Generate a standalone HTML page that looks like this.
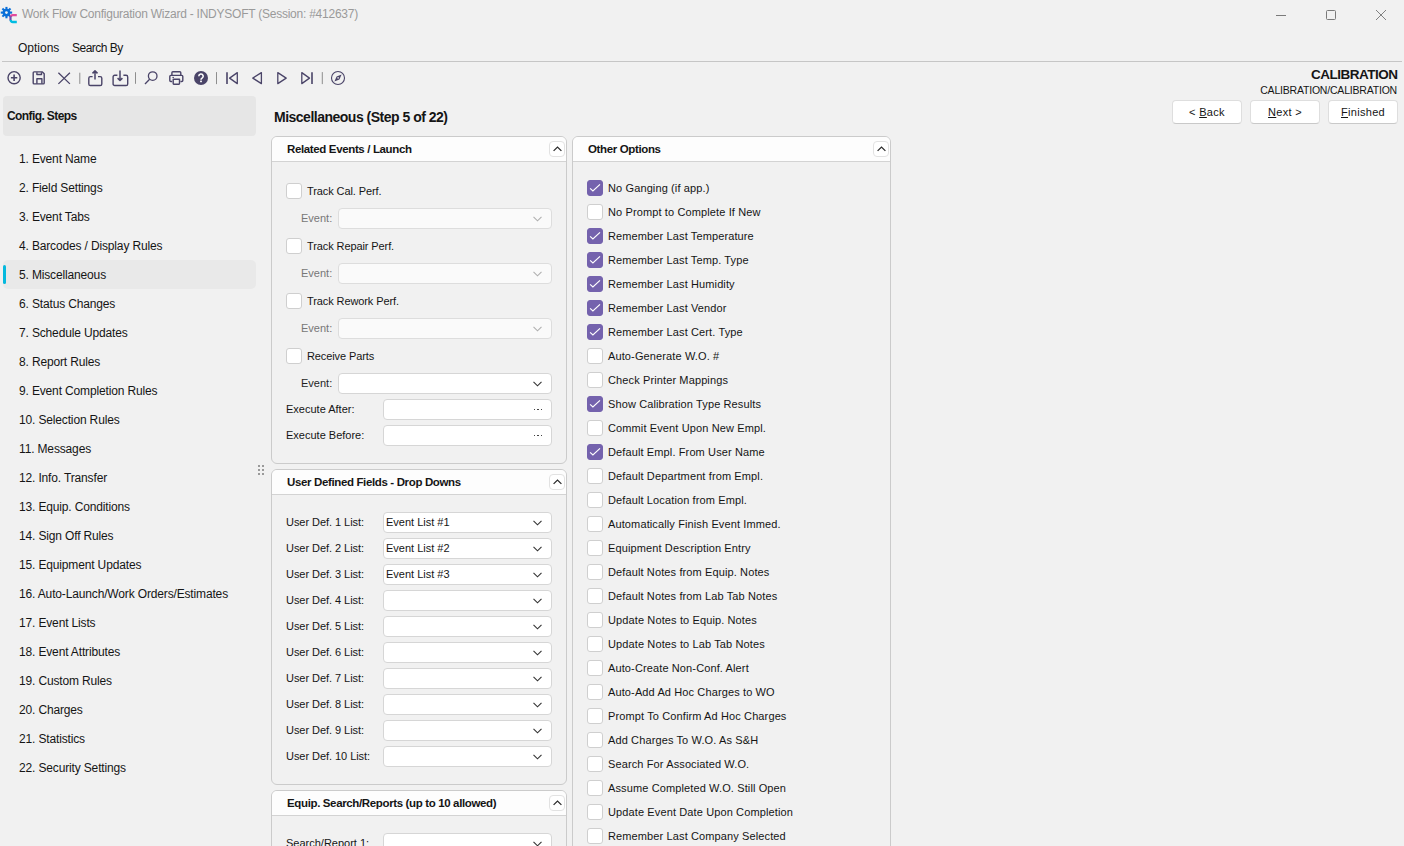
<!DOCTYPE html><html><head><meta charset="utf-8"><style>
*{margin:0;padding:0;box-sizing:border-box}
html,body{width:1404px;height:846px;overflow:hidden;background:#f1f1f1;font-family:"Liberation Sans",sans-serif;color:#151515}
.a{position:absolute}
.t{position:absolute;font-size:12px;line-height:14px;height:14px;margin-top:-7px;white-space:nowrap}
.b{font-weight:bold}
.s{font-size:11px;line-height:13px;height:13px;margin-top:-6.5px}
.hd{font-size:11.5px;letter-spacing:-0.36px}
.panel{position:absolute;border:1px solid #cbcbcb;border-radius:6px;background:#f1f1f1;overflow:hidden}
.ph{position:absolute;left:0;right:0;top:0;background:#fdfdfd;border-bottom:1px solid #d3d3d3}
.colbtn{position:absolute;width:16px;height:16px;border:1px solid #e2e2e2;border-radius:4px;background:#fff;display:flex;align-items:center;justify-content:center}
.cb{position:absolute;width:16px;height:16px;border:1px solid #cfcfcf;border-radius:3px;background:#fff}
.cb.on{background:#7462ad;border-color:#7462ad}
.cb svg{position:absolute;left:-1px;top:-1px}
.combo{position:absolute;height:21px;border:1px solid #d6d6d6;border-radius:4px;background:#fff}
.combo.dis{background:#fafafa;border-color:#dddddd}
.combo .chev{position:absolute;right:9px;top:7px}
.btn{position:absolute;height:24px;border:1px solid #dedede;border-bottom-color:#c9c9c9;border-radius:4px;background:#fff}
.ic{position:absolute}
.sep{position:absolute;width:1px;height:12px;background:#9a96a8;top:72px}
</style></head><body>

<svg class="a" style="left:0;top:5px" width="20" height="20" viewBox="0 0 20 20">
<g fill="#0b6fd8"><circle cx="6.45" cy="7.6" r="3.9"/><rect x="5.4" y="1.9" width="2.1" height="11.4" transform="rotate(0 6.45 7.6)"/><rect x="5.4" y="1.9" width="2.1" height="11.4" transform="rotate(45 6.45 7.6)"/><rect x="5.4" y="1.9" width="2.1" height="11.4" transform="rotate(90 6.45 7.6)"/><rect x="5.4" y="1.9" width="2.1" height="11.4" transform="rotate(135 6.45 7.6)"/></g>
<circle cx="6.45" cy="7.6" r="1.35" fill="#f1f1f1"/>
<path d="M16.8 10.1h-4a2 2 0 0 0 -2 2" fill="none" stroke="#e24a9c" stroke-width="2.2"/>
<path d="M10.5 11.3v4.3" fill="none" stroke="#6a4fb0" stroke-width="2.2"/>
<path d="M10.8 15a2 2 0 0 0 2 2h4" fill="none" stroke="#00bde2" stroke-width="2.3"/>
</svg>
<div class="t" style="left:22px;top:14px;color:#9a9a9a;letter-spacing:-0.24px">Work Flow Configuration Wizard - INDYSOFT (Session: #412637)</div>
<div class="a" style="left:1276px;top:15px;width:10px;height:1px;background:#7a7a7a"></div>
<div class="a" style="left:1326px;top:10px;width:10px;height:10px;border:1px solid #7a7a7a;border-radius:1.5px"></div>
<svg class="a" style="left:1376px;top:10px" width="10" height="10" viewBox="0 0 10 10"><path d="M0 0L10 10M10 0L0 10" stroke="#7a7a7a" stroke-width="0.95"/></svg>
<div class="t" style="left:18px;top:48px;">Options</div>
<div class="t" style="left:72px;top:48px;letter-spacing:-0.5px">Search By</div>
<div class="a" style="left:2px;top:61px;width:1400px;height:1px;background:#c6c6c6"></div>
<svg class="a" style="left:0;top:62px" width="360" height="30" viewBox="0 62 360 30">
<g fill="none" stroke="#4a4468" stroke-width="1.4" stroke-linejoin="round">
<circle cx="14.1" cy="77.7" r="6.1"/><path d="M14.1 74.6v6.3M10.9 77.7h6.4" stroke-width="1.6"/>
<path d="M35.2 71.9h7.2l1.8 1.8v9.3a0.9 0.9 0 0 1 -0.9 0.9h-9.2a0.9 0.9 0 0 1 -0.9 -0.9v-10.2a0.9 0.9 0 0 1 0.9 -0.9z"/>
<path d="M36.9 72.2v2.3h4.6v-2.3M36.9 83.8v-5h5v5"/>
<path d="M58.4 72.7l11.5 11.2M69.9 72.7l-11.5 11.2" stroke-width="1.3"/>
<path d="M92.6 76.6h-2.2a1.6 1.6 0 0 0 -1.6 1.6v5.7a1.6 1.6 0 0 0 1.6 1.6h9.8a1.6 1.6 0 0 0 1.6 -1.6v-5.7a1.6 1.6 0 0 0 -1.6 -1.6h-2.2"/>
<path d="M95 79.6v-8.6M92.5 73.4l2.5-2.5 2.5 2.5" stroke-width="1.5"/>
<path d="M117.4 75.3h-2.7a1.6 1.6 0 0 0 -1.6 1.6v7a1.6 1.6 0 0 0 1.6 1.6h11.4a1.6 1.6 0 0 0 1.6 -1.6v-7a1.6 1.6 0 0 0 -1.6 -1.6h-2.7"/>
<path d="M120 70.6v9.6M117.6 78.1l2.4 2.4 2.4-2.4" stroke-width="1.5"/>
<circle cx="152.7" cy="76.1" r="4.3" stroke-width="1.3"/><path d="M149.6 79.2l-4.6 4.8" stroke-width="1.3"/>
<path d="M171.9 75.4v-2.6a1 1 0 0 1 1 -1h6.9a1 1 0 0 1 1 1v2.6"/>
<path d="M172.2 81.5h-1.4a1 1 0 0 1 -1 -1v-4.1a1 1 0 0 1 1 -1h11a1 1 0 0 1 1 1v4.1a1 1 0 0 1 -1 1h-1.4"/>
<path d="M173.2 79.2h6.3v4.4a0.6 0.6 0 0 1 -0.6 0.6h-5.1a0.6 0.6 0 0 1 -0.6 -0.6z"/>
<path d="M172.4 77.4h1.6" stroke-width="1"/>
<path d="M227 72.2v11.8" stroke-width="1.6"/><path d="M237.3 72.6l-7.7 5.5 7.7 5.5z" stroke-width="1.3"/>
<path d="M261.4 72.6l-8.6 5.5 8.6 5.5z" stroke-width="1.3"/>
<path d="M277.8 72.6l8.4 5.5-8.4 5.5z" stroke-width="1.3"/>
<path d="M312 72.2v11.8" stroke-width="1.6"/><path d="M301.8 72.6l7.7 5.5-7.7 5.5z" stroke-width="1.3"/>
<circle cx="338" cy="77.95" r="6.5" stroke-width="1.1"/>
</g>
<path d="M341.6 74.4L339.4 79.5L334.4 81.6L336.6 76.5z" fill="#4a4468"/>
<circle cx="338.1" cy="77.9" r="0.8" fill="#f1f1f1"/>
<circle cx="201" cy="78" r="7" fill="#4a4468"/>
<path d="M198.8 76.2a2.2 2.2 0 1 1 3.3 1.9c-0.8 0.5 -1.1 0.8 -1.1 1.7" fill="none" stroke="#fff" stroke-width="1.6"/>
<rect x="200.1" y="80.6" width="1.8" height="1.6" fill="#fff"/>
<g fill="#8e8e8e"><rect x="79.3" y="72.7" width="1" height="11.2"/><rect x="135" y="72.2" width="1" height="11.6"/><rect x="216" y="72.1" width="1" height="12"/><rect x="321.8" y="72.1" width="1" height="12"/></g>
</svg>
<div class="t b" style="right:6.5px;top:75px;font-size:13.5px;line-height:16px;height:16px;margin-top:-8px;letter-spacing:-0.5px">CALIBRATION</div>
<div class="t" style="right:7px;top:90px;font-size:10.5px;letter-spacing:-0.2px">CALIBRATION/CALIBRATION</div>
<div class="btn" style="left:1172px;top:100px;width:70px"></div>
<div class="t s" style="left:1172px;width:70px;text-align:center;top:112px;letter-spacing:0.3px">&lt; <u>B</u>ack</div>
<div class="btn" style="left:1250px;top:100px;width:70px"></div>
<div class="t s" style="left:1250px;width:70px;text-align:center;top:112px;letter-spacing:0.3px"><u>N</u>ext &gt;</div>
<div class="btn" style="left:1328px;top:100px;width:70px"></div>
<div class="t s" style="left:1328px;width:70px;text-align:center;top:112px;letter-spacing:0.3px"><u>F</u>inished</div>
<div class="a" style="left:3px;top:96px;width:253px;height:40px;background:#e6e6e6;border-radius:4px"></div>
<div class="t b" style="left:7px;top:116px;letter-spacing:-0.6px">Config. Steps</div>
<div class="a" style="left:3px;top:260px;width:253px;height:29px;background:#e9e9e9;border-radius:5px"></div>
<div class="a" style="left:3px;top:265px;width:3px;height:19px;background:#05b9de;border-radius:2px"></div>
<div class="t" style="left:19px;top:158.5px;letter-spacing:-0.15px">1. Event Name</div>
<div class="t" style="left:19px;top:187.5px;letter-spacing:-0.15px">2. Field Settings</div>
<div class="t" style="left:19px;top:216.5px;letter-spacing:-0.15px">3. Event Tabs</div>
<div class="t" style="left:19px;top:245.5px;letter-spacing:-0.15px">4. Barcodes / Display Rules</div>
<div class="t" style="left:19px;top:274.5px;letter-spacing:-0.15px">5. Miscellaneous</div>
<div class="t" style="left:19px;top:303.5px;letter-spacing:-0.15px">6. Status Changes</div>
<div class="t" style="left:19px;top:332.5px;letter-spacing:-0.15px">7. Schedule Updates</div>
<div class="t" style="left:19px;top:361.5px;letter-spacing:-0.15px">8. Report Rules</div>
<div class="t" style="left:19px;top:390.5px;letter-spacing:-0.15px">9. Event Completion Rules</div>
<div class="t" style="left:19px;top:419.5px;letter-spacing:-0.15px">10. Selection Rules</div>
<div class="t" style="left:19px;top:448.5px;letter-spacing:-0.15px">11. Messages</div>
<div class="t" style="left:19px;top:477.5px;letter-spacing:-0.15px">12. Info. Transfer</div>
<div class="t" style="left:19px;top:506.5px;letter-spacing:-0.15px">13. Equip. Conditions</div>
<div class="t" style="left:19px;top:535.5px;letter-spacing:-0.15px">14. Sign Off Rules</div>
<div class="t" style="left:19px;top:564.5px;letter-spacing:-0.15px">15. Equipment Updates</div>
<div class="t" style="left:19px;top:593.5px;letter-spacing:-0.15px">16. Auto-Launch/Work Orders/Estimates</div>
<div class="t" style="left:19px;top:622.5px;letter-spacing:-0.15px">17. Event Lists</div>
<div class="t" style="left:19px;top:651.5px;letter-spacing:-0.15px">18. Event Attributes</div>
<div class="t" style="left:19px;top:680.5px;letter-spacing:-0.15px">19. Custom Rules</div>
<div class="t" style="left:19px;top:709.5px;letter-spacing:-0.15px">20. Charges</div>
<div class="t" style="left:19px;top:738.5px;letter-spacing:-0.15px">21. Statistics</div>
<div class="t" style="left:19px;top:767.5px;letter-spacing:-0.15px">22. Security Settings</div>
<div class="a" style="left:258px;top:465px;width:2px;height:2px;background:#9a9a9a"></div>
<div class="a" style="left:262px;top:465px;width:2px;height:2px;background:#9a9a9a"></div>
<div class="a" style="left:258px;top:469px;width:2px;height:2px;background:#9a9a9a"></div>
<div class="a" style="left:262px;top:469px;width:2px;height:2px;background:#9a9a9a"></div>
<div class="a" style="left:258px;top:473px;width:2px;height:2px;background:#9a9a9a"></div>
<div class="a" style="left:262px;top:473px;width:2px;height:2px;background:#9a9a9a"></div>
<div class="t b" style="left:274px;top:117px;font-size:14px;line-height:16px;height:16px;margin-top:-8px;letter-spacing:-0.5px">Miscellaneous (Step 5 of 22)</div>
<div class="panel" style="left:271px;top:136px;width:296px;height:328px"><div class="ph" style="height:25px"></div></div>
<div class="t b hd" style="left:287px;top:149px;">Related Events / Launch</div>
<div class="colbtn" style="left:549px;top:141px"><svg width="9" height="6" viewBox="0 0 9 6"><path d="M0.6 4.9 L4.5 1.1 L8.4 4.9" fill="none" stroke="#2a2a2a" stroke-width="1.25"/></svg></div>
<div class="cb" style="left:286px;top:183px"></div>
<div class="t s" style="left:307px;top:191px;letter-spacing:-0.1px">Track Cal. Perf.</div>
<div class="t s" style="left:301px;top:218px;color:#777">Event:</div>
<div class="combo dis" style="left:338px;top:208px;width:214px"><svg class="chev" width="9" height="6" viewBox="0 0 9 6"><path d="M0.5 0.8 L4.5 4.8 L8.5 0.8" fill="none" stroke="#b0b0b0" stroke-width="1.1"/></svg></div>
<div class="cb" style="left:286px;top:238px"></div>
<div class="t s" style="left:307px;top:246px;letter-spacing:-0.1px">Track Repair Perf.</div>
<div class="t s" style="left:301px;top:273px;color:#777">Event:</div>
<div class="combo dis" style="left:338px;top:263px;width:214px"><svg class="chev" width="9" height="6" viewBox="0 0 9 6"><path d="M0.5 0.8 L4.5 4.8 L8.5 0.8" fill="none" stroke="#b0b0b0" stroke-width="1.1"/></svg></div>
<div class="cb" style="left:286px;top:293px"></div>
<div class="t s" style="left:307px;top:301px;letter-spacing:-0.1px">Track Rework Perf.</div>
<div class="t s" style="left:301px;top:328px;color:#777">Event:</div>
<div class="combo dis" style="left:338px;top:318px;width:214px"><svg class="chev" width="9" height="6" viewBox="0 0 9 6"><path d="M0.5 0.8 L4.5 4.8 L8.5 0.8" fill="none" stroke="#b0b0b0" stroke-width="1.1"/></svg></div>
<div class="cb" style="left:286px;top:348px"></div>
<div class="t s" style="left:307px;top:356px;letter-spacing:-0.1px">Receive Parts</div>
<div class="t s" style="left:301px;top:383px;color:#1f1f1f">Event:</div>
<div class="combo" style="left:338px;top:373px;width:214px"><svg class="chev" width="9" height="6" viewBox="0 0 9 6"><path d="M0.5 0.8 L4.5 4.8 L8.5 0.8" fill="none" stroke="#333" stroke-width="1.1"/></svg></div>
<div class="t s" style="left:286px;top:409px;">Execute After:</div>
<div class="combo" style="left:383px;top:399px;width:169px"><div class="a" style="left:150px;top:9px;width:1.3px;height:1.3px;background:#444"></div><div class="a" style="left:153.3px;top:9px;width:1.3px;height:1.3px;background:#444"></div><div class="a" style="left:156.6px;top:9px;width:1.3px;height:1.3px;background:#444"></div></div>
<div class="t s" style="left:286px;top:435px;">Execute Before:</div>
<div class="combo" style="left:383px;top:425px;width:169px"><div class="a" style="left:150px;top:9px;width:1.3px;height:1.3px;background:#444"></div><div class="a" style="left:153.3px;top:9px;width:1.3px;height:1.3px;background:#444"></div><div class="a" style="left:156.6px;top:9px;width:1.3px;height:1.3px;background:#444"></div></div>
<div class="panel" style="left:271px;top:469px;width:296px;height:316px"><div class="ph" style="height:25px"></div></div>
<div class="t b hd" style="left:287px;top:482px;">User Defined Fields - Drop Downs</div>
<div class="colbtn" style="left:549px;top:474px"><svg width="9" height="6" viewBox="0 0 9 6"><path d="M0.6 4.9 L4.5 1.1 L8.4 4.9" fill="none" stroke="#2a2a2a" stroke-width="1.25"/></svg></div>
<div class="t s" style="left:286px;top:522px;letter-spacing:-0.05px">User Def. 1 List:</div>
<div class="combo" style="left:383px;top:512px;width:169px"><svg class="chev" width="9" height="6" viewBox="0 0 9 6"><path d="M0.5 0.8 L4.5 4.8 L8.5 0.8" fill="none" stroke="#333" stroke-width="1.1"/></svg><div class="t s" style="left:2px;top:9px">Event List #1</div></div>
<div class="t s" style="left:286px;top:548px;letter-spacing:-0.05px">User Def. 2 List:</div>
<div class="combo" style="left:383px;top:538px;width:169px"><svg class="chev" width="9" height="6" viewBox="0 0 9 6"><path d="M0.5 0.8 L4.5 4.8 L8.5 0.8" fill="none" stroke="#333" stroke-width="1.1"/></svg><div class="t s" style="left:2px;top:9px">Event List #2</div></div>
<div class="t s" style="left:286px;top:574px;letter-spacing:-0.05px">User Def. 3 List:</div>
<div class="combo" style="left:383px;top:564px;width:169px"><svg class="chev" width="9" height="6" viewBox="0 0 9 6"><path d="M0.5 0.8 L4.5 4.8 L8.5 0.8" fill="none" stroke="#333" stroke-width="1.1"/></svg><div class="t s" style="left:2px;top:9px">Event List #3</div></div>
<div class="t s" style="left:286px;top:600px;letter-spacing:-0.05px">User Def. 4 List:</div>
<div class="combo" style="left:383px;top:590px;width:169px"><svg class="chev" width="9" height="6" viewBox="0 0 9 6"><path d="M0.5 0.8 L4.5 4.8 L8.5 0.8" fill="none" stroke="#333" stroke-width="1.1"/></svg><div class="t s" style="left:2px;top:9px"></div></div>
<div class="t s" style="left:286px;top:626px;letter-spacing:-0.05px">User Def. 5 List:</div>
<div class="combo" style="left:383px;top:616px;width:169px"><svg class="chev" width="9" height="6" viewBox="0 0 9 6"><path d="M0.5 0.8 L4.5 4.8 L8.5 0.8" fill="none" stroke="#333" stroke-width="1.1"/></svg><div class="t s" style="left:2px;top:9px"></div></div>
<div class="t s" style="left:286px;top:652px;letter-spacing:-0.05px">User Def. 6 List:</div>
<div class="combo" style="left:383px;top:642px;width:169px"><svg class="chev" width="9" height="6" viewBox="0 0 9 6"><path d="M0.5 0.8 L4.5 4.8 L8.5 0.8" fill="none" stroke="#333" stroke-width="1.1"/></svg><div class="t s" style="left:2px;top:9px"></div></div>
<div class="t s" style="left:286px;top:678px;letter-spacing:-0.05px">User Def. 7 List:</div>
<div class="combo" style="left:383px;top:668px;width:169px"><svg class="chev" width="9" height="6" viewBox="0 0 9 6"><path d="M0.5 0.8 L4.5 4.8 L8.5 0.8" fill="none" stroke="#333" stroke-width="1.1"/></svg><div class="t s" style="left:2px;top:9px"></div></div>
<div class="t s" style="left:286px;top:704px;letter-spacing:-0.05px">User Def. 8 List:</div>
<div class="combo" style="left:383px;top:694px;width:169px"><svg class="chev" width="9" height="6" viewBox="0 0 9 6"><path d="M0.5 0.8 L4.5 4.8 L8.5 0.8" fill="none" stroke="#333" stroke-width="1.1"/></svg><div class="t s" style="left:2px;top:9px"></div></div>
<div class="t s" style="left:286px;top:730px;letter-spacing:-0.05px">User Def. 9 List:</div>
<div class="combo" style="left:383px;top:720px;width:169px"><svg class="chev" width="9" height="6" viewBox="0 0 9 6"><path d="M0.5 0.8 L4.5 4.8 L8.5 0.8" fill="none" stroke="#333" stroke-width="1.1"/></svg><div class="t s" style="left:2px;top:9px"></div></div>
<div class="t s" style="left:286px;top:756px;letter-spacing:-0.05px">User Def. 10 List:</div>
<div class="combo" style="left:383px;top:746px;width:169px"><svg class="chev" width="9" height="6" viewBox="0 0 9 6"><path d="M0.5 0.8 L4.5 4.8 L8.5 0.8" fill="none" stroke="#333" stroke-width="1.1"/></svg><div class="t s" style="left:2px;top:9px"></div></div>
<div class="panel" style="left:271px;top:790px;width:296px;height:80px"><div class="ph" style="height:25px"></div></div>
<div class="t b hd" style="left:287px;top:803px;">Equip. Search/Reports (up to 10 allowed)</div>
<div class="colbtn" style="left:549px;top:795px"><svg width="9" height="6" viewBox="0 0 9 6"><path d="M0.6 4.9 L4.5 1.1 L8.4 4.9" fill="none" stroke="#2a2a2a" stroke-width="1.25"/></svg></div>
<div class="t s" style="left:286px;top:843px;">Search/Report 1:</div>
<div class="combo" style="left:383px;top:833px;width:169px"><svg class="chev" width="9" height="6" viewBox="0 0 9 6"><path d="M0.5 0.8 L4.5 4.8 L8.5 0.8" fill="none" stroke="#333" stroke-width="1.1"/></svg></div>
<div class="panel" style="left:572px;top:136px;width:319px;height:730px"><div class="ph" style="height:25px"></div></div>
<div class="t b hd" style="left:588px;top:149px;">Other Options</div>
<div class="colbtn" style="left:873px;top:141px"><svg width="9" height="6" viewBox="0 0 9 6"><path d="M0.6 4.9 L4.5 1.1 L8.4 4.9" fill="none" stroke="#2a2a2a" stroke-width="1.25"/></svg></div>
<div class="cb on" style="left:587px;top:180px"><svg width="16" height="16" viewBox="0 0 16 16"><path d="M3.1 8.3 L5.9 11 L13 4.3" fill="none" stroke="#fff" stroke-width="1.15"/></svg></div>
<div class="t s" style="left:608px;top:188px;letter-spacing:0.12px">No Ganging (if app.)</div>
<div class="cb" style="left:587px;top:204px"></div>
<div class="t s" style="left:608px;top:212px;letter-spacing:0.12px">No Prompt to Complete If New</div>
<div class="cb on" style="left:587px;top:228px"><svg width="16" height="16" viewBox="0 0 16 16"><path d="M3.1 8.3 L5.9 11 L13 4.3" fill="none" stroke="#fff" stroke-width="1.15"/></svg></div>
<div class="t s" style="left:608px;top:236px;letter-spacing:0.12px">Remember Last Temperature</div>
<div class="cb on" style="left:587px;top:252px"><svg width="16" height="16" viewBox="0 0 16 16"><path d="M3.1 8.3 L5.9 11 L13 4.3" fill="none" stroke="#fff" stroke-width="1.15"/></svg></div>
<div class="t s" style="left:608px;top:260px;letter-spacing:0.12px">Remember Last Temp. Type</div>
<div class="cb on" style="left:587px;top:276px"><svg width="16" height="16" viewBox="0 0 16 16"><path d="M3.1 8.3 L5.9 11 L13 4.3" fill="none" stroke="#fff" stroke-width="1.15"/></svg></div>
<div class="t s" style="left:608px;top:284px;letter-spacing:0.12px">Remember Last Humidity</div>
<div class="cb on" style="left:587px;top:300px"><svg width="16" height="16" viewBox="0 0 16 16"><path d="M3.1 8.3 L5.9 11 L13 4.3" fill="none" stroke="#fff" stroke-width="1.15"/></svg></div>
<div class="t s" style="left:608px;top:308px;letter-spacing:0.12px">Remember Last Vendor</div>
<div class="cb on" style="left:587px;top:324px"><svg width="16" height="16" viewBox="0 0 16 16"><path d="M3.1 8.3 L5.9 11 L13 4.3" fill="none" stroke="#fff" stroke-width="1.15"/></svg></div>
<div class="t s" style="left:608px;top:332px;letter-spacing:0.12px">Remember Last Cert. Type</div>
<div class="cb" style="left:587px;top:348px"></div>
<div class="t s" style="left:608px;top:356px;letter-spacing:0.12px">Auto-Generate W.O. #</div>
<div class="cb" style="left:587px;top:372px"></div>
<div class="t s" style="left:608px;top:380px;letter-spacing:0.12px">Check Printer Mappings</div>
<div class="cb on" style="left:587px;top:396px"><svg width="16" height="16" viewBox="0 0 16 16"><path d="M3.1 8.3 L5.9 11 L13 4.3" fill="none" stroke="#fff" stroke-width="1.15"/></svg></div>
<div class="t s" style="left:608px;top:404px;letter-spacing:0.12px">Show Calibration Type Results</div>
<div class="cb" style="left:587px;top:420px"></div>
<div class="t s" style="left:608px;top:428px;letter-spacing:0.12px">Commit Event Upon New Empl.</div>
<div class="cb on" style="left:587px;top:444px"><svg width="16" height="16" viewBox="0 0 16 16"><path d="M3.1 8.3 L5.9 11 L13 4.3" fill="none" stroke="#fff" stroke-width="1.15"/></svg></div>
<div class="t s" style="left:608px;top:452px;letter-spacing:0.12px">Default Empl. From User Name</div>
<div class="cb" style="left:587px;top:468px"></div>
<div class="t s" style="left:608px;top:476px;letter-spacing:0.12px">Default Department from Empl.</div>
<div class="cb" style="left:587px;top:492px"></div>
<div class="t s" style="left:608px;top:500px;letter-spacing:0.12px">Default Location from Empl.</div>
<div class="cb" style="left:587px;top:516px"></div>
<div class="t s" style="left:608px;top:524px;letter-spacing:0.12px">Automatically Finish Event Immed.</div>
<div class="cb" style="left:587px;top:540px"></div>
<div class="t s" style="left:608px;top:548px;letter-spacing:0.12px">Equipment Description Entry</div>
<div class="cb" style="left:587px;top:564px"></div>
<div class="t s" style="left:608px;top:572px;letter-spacing:0.12px">Default Notes from Equip. Notes</div>
<div class="cb" style="left:587px;top:588px"></div>
<div class="t s" style="left:608px;top:596px;letter-spacing:0.12px">Default Notes from Lab Tab Notes</div>
<div class="cb" style="left:587px;top:612px"></div>
<div class="t s" style="left:608px;top:620px;letter-spacing:0.12px">Update Notes to Equip. Notes</div>
<div class="cb" style="left:587px;top:636px"></div>
<div class="t s" style="left:608px;top:644px;letter-spacing:0.12px">Update Notes to Lab Tab Notes</div>
<div class="cb" style="left:587px;top:660px"></div>
<div class="t s" style="left:608px;top:668px;letter-spacing:0.12px">Auto-Create Non-Conf. Alert</div>
<div class="cb" style="left:587px;top:684px"></div>
<div class="t s" style="left:608px;top:692px;letter-spacing:0.12px">Auto-Add Ad Hoc Charges to WO</div>
<div class="cb" style="left:587px;top:708px"></div>
<div class="t s" style="left:608px;top:716px;letter-spacing:0.12px">Prompt To Confirm Ad Hoc Charges</div>
<div class="cb" style="left:587px;top:732px"></div>
<div class="t s" style="left:608px;top:740px;letter-spacing:0.12px">Add Charges To W.O. As S&amp;H</div>
<div class="cb" style="left:587px;top:756px"></div>
<div class="t s" style="left:608px;top:764px;letter-spacing:0.12px">Search For Associated W.O.</div>
<div class="cb" style="left:587px;top:780px"></div>
<div class="t s" style="left:608px;top:788px;letter-spacing:0.12px">Assume Completed W.O. Still Open</div>
<div class="cb" style="left:587px;top:804px"></div>
<div class="t s" style="left:608px;top:812px;letter-spacing:0.12px">Update Event Date Upon Completion</div>
<div class="cb" style="left:587px;top:828px"></div>
<div class="t s" style="left:608px;top:836px;letter-spacing:0.12px">Remember Last Company Selected</div>
</body></html>
